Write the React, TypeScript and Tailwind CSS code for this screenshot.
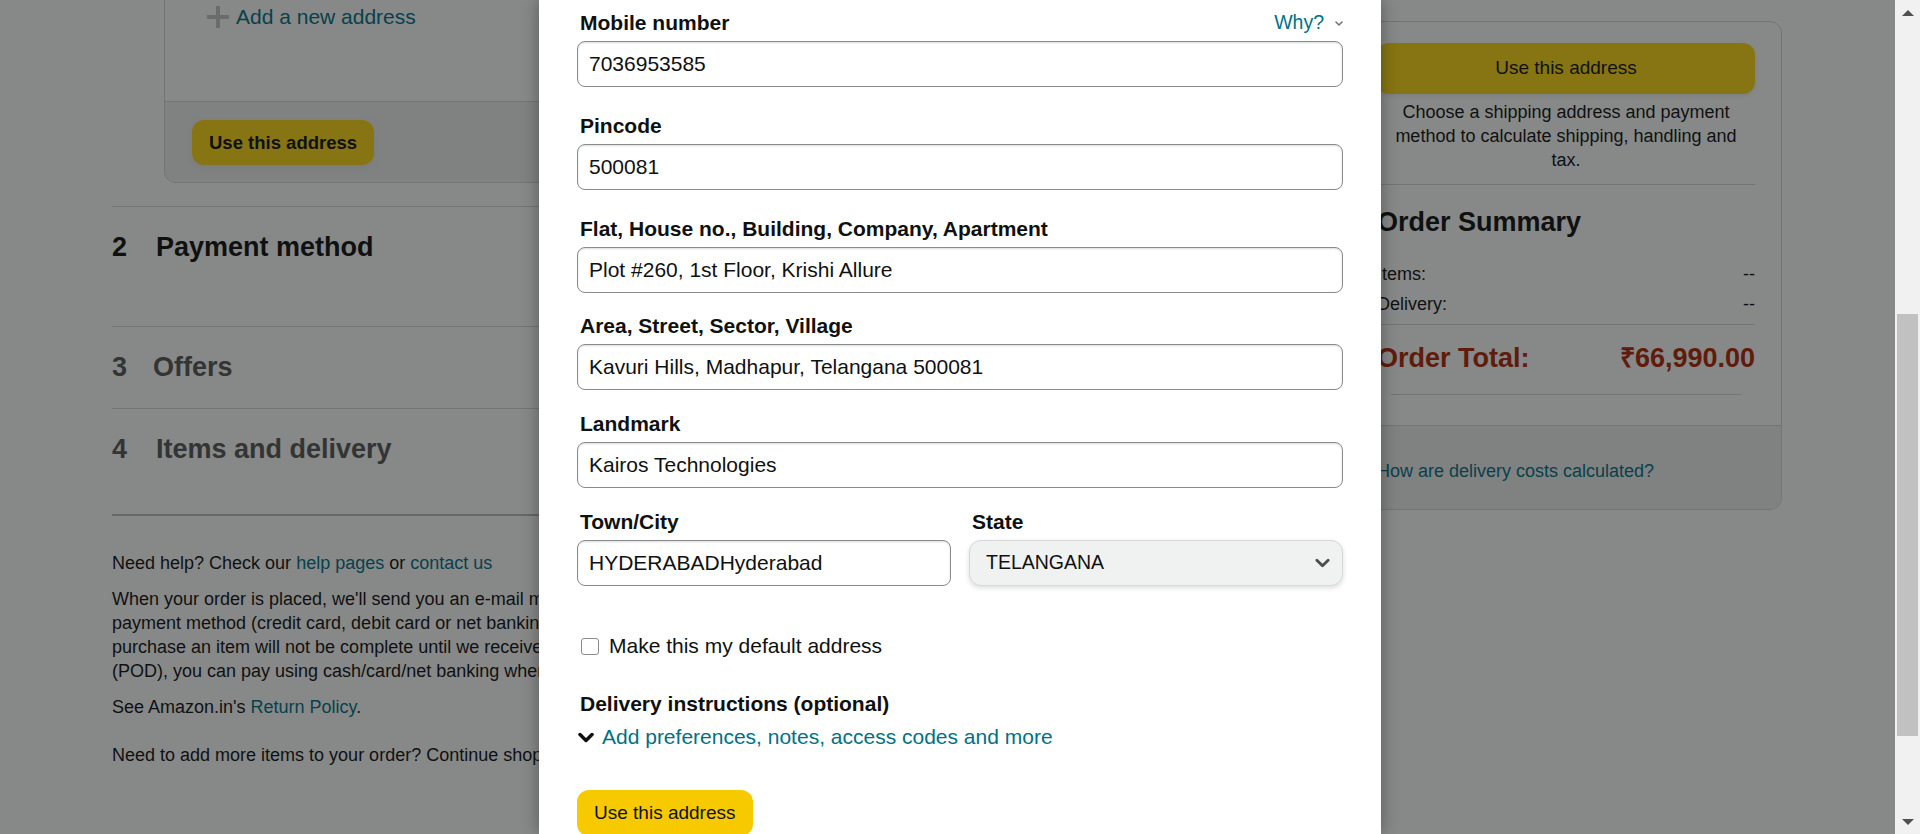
import React from 'react'

const fields = [
  { label: 'Pincode', value: '500081', gap: 'mt-[24px]' },
  { label: 'Flat, House no., Building, Company, Apartment', value: 'Plot #260, 1st Floor, Krishi Allure', gap: 'mt-[24px]' },
  { label: 'Area, Street, Sector, Village', value: 'Kavuri Hills, Madhapur, Telangana 500081', gap: 'mt-[18px]' },
  { label: 'Landmark', value: 'Kairos Technologies', gap: 'mt-[19px]' },
]

function TextInput({ value }: { value: string }) {
  return (
    <div className="mt-[3px] h-[46px] rounded-[8px] border border-[#888C8C] bg-white px-[11px] flex items-center text-[21px] text-[#0F1111] shadow-[inset_0_1px_2px_rgba(15,17,17,0.15)]">
      {value}
    </div>
  )
}

function FieldLabel({ children }: { children: React.ReactNode }) {
  return <div className="h-[30px] leading-[30px] pl-[3px] text-[21px] font-bold text-[#0F1111]">{children}</div>
}

function Chevron({ className, width = 3 }: { className: string; width?: number }) {
  return (
    <svg viewBox="0 0 16 10" className={className} fill="none" stroke="currentColor" strokeWidth={width} strokeLinecap="round" strokeLinejoin="round">
      <path d="M2 2l6 6 6-6" />
    </svg>
  )
}

function Section({ num, title, dark, className, numW }: { num: string; title: string; dark?: boolean; className: string; numW: string }) {
  return (
    <div className={className}>
      <div className={`flex items-center h-[36px] text-[27px] font-bold ${dark ? 'text-[#0F1111]' : 'text-[#565959]'}`}>
        <span className={numW}>{num}</span>
        <span>{title}</span>
      </div>
    </div>
  )
}

function PageBehind() {
  return (
    <div className="flex gap-[30px] pl-[112px] text-[#0F1111]">
      <div className="w-[1208px] shrink-0">
        <div className="ml-[52px] rounded-b-[12px] border-x border-b border-[#D5D9D9] bg-white">
          <div className="h-[101px] pl-[42px]">
            <div className="flex items-center h-[34px] gap-[7px]">
              <svg viewBox="0 0 22 22" className="w-[22px] h-[22px] text-[#C4C6C6]" fill="currentColor">
                <rect x="9" y="0" width="4" height="22" />
                <rect x="0" y="9" width="22" height="4" />
              </svg>
              <span className="text-[21px] text-[#007185]">Add a new address</span>
            </div>
          </div>
          <div className="border-t border-[#D5D9D9] bg-[#F0F2F2] rounded-b-[11px] pl-[27px] pt-[18px] pb-[17px]">
            <div className="inline-flex items-center h-[45px] px-[17px] rounded-[12px] bg-[#FFD814] text-[18.5px] font-bold shadow-[0_2px_5px_rgba(213,217,217,0.5)]">
              Use this address
            </div>
          </div>
        </div>

        <Section className="mt-[23px] h-[120px] border-t border-[#D5D9D9] pt-[22px]" num="2" title="Payment method" dark numW="w-[44px]" />
        <Section className="h-[82px] border-t border-[#D5D9D9] pt-[22px]" num="3" title="Offers" numW="w-[41px]" />
        <Section className="h-[108px] border-t border-b-2 border-t-[#D5D9D9] border-b-[#BBBFBF] pt-[22px]" num="4" title="Items and delivery" numW="w-[44px]" />

        {/* the rest of these lines sits under the modal */}
        <div className="text-[18px] leading-[24px] whitespace-nowrap">
          <p className="mt-[35px]">
            Need help? Check our <span className="text-[#007185]">help pages</span> or <span className="text-[#007185]">contact us</span>
          </p>
          <div className="mt-[12px]">
            <div>When your order is placed, we'll send you an e-mail message</div>
            <div>payment method (credit card, debit card or net banking),</div>
            <div>purchase an item will not be complete until we receive</div>
            <div>(POD), you can pay using cash/card/net banking when</div>
          </div>
          <p className="mt-[12px]">
            See Amazon.in's <span className="text-[#007185]">Return Policy</span>.
          </p>
          <p className="mt-[24px]">Need to add more items to your order? Continue shopping</p>
        </div>
      </div>

      <div className="w-[432px] shrink-0 pt-[21px]">
        <div className="rounded-[12px] border border-[#D5D9D9] bg-white">
          <div className="px-[26px] pt-[21px] pb-[30px]">
            <div className="h-[51px] rounded-[12px] bg-[#FFD814] flex items-center justify-center text-[19px] shadow-[0_2px_5px_rgba(213,217,217,0.5)]">
              Use this address
            </div>
            <p className="mt-[6px] text-center text-[18px] leading-[24px]">
              Choose a shipping address and payment
              <br />
              method to calculate shipping, handling and
              <br />
              tax.
            </p>
            <div className="mt-[12px] border-t border-[#D5D9D9]" />
            <h2 className="mt-[19px] text-[27px] leading-[36px] font-bold">Order Summary</h2>
            <div className="mt-[19px] text-[18px] leading-[30px]">
              <div className="flex justify-between">
                <span>Items:</span>
                <span>--</span>
              </div>
              <div className="flex justify-between">
                <span>Delivery:</span>
                <span>--</span>
              </div>
            </div>
            <div className="mt-[5px] border-t border-[#D5D9D9]" />
            <div className="mt-[15px] flex justify-between text-[27px] leading-[36px] font-bold text-[#B12704]">
              <span>Order Total:</span>
              <span>₹66,990.00</span>
            </div>
            <div className="mt-[18px] mx-[14px] border-t border-[#D5D9D9]" />
          </div>
          <div className="h-[84px] border-t border-[#D5D9D9] bg-[#F0F2F2] rounded-b-[11px] px-[26px] pt-[33px]">
            <span className="text-[18px] leading-[24px] text-[#007185]">How are delivery costs calculated?</span>
          </div>
        </div>
      </div>
    </div>
  )
}

function AddressModal() {
  return (
    <div className="absolute top-0 bottom-0 left-[539px] w-[842px] bg-white shadow-[0_0_16px_rgba(0,0,0,0.35)] px-[38px] pt-[8px] text-[#0F1111]">
      <div className="flex items-center justify-between">
        <FieldLabel>Mobile number</FieldLabel>
        <div className="flex items-center gap-[11px] text-[19.5px] text-[#007185]">
          <span>Why?</span>
          <Chevron className="w-[8px] h-[5px] text-[#6F7373]" />
        </div>
      </div>
      <TextInput value="7036953585" />

      {fields.map(f => (
        <div key={f.label} className={f.gap}>
          <FieldLabel>{f.label}</FieldLabel>
          <TextInput value={f.value} />
        </div>
      ))}

      <div className="mt-[19px] grid grid-cols-2 gap-[18px]">
        <div>
          <FieldLabel>Town/City</FieldLabel>
          <TextInput value="HYDERABADHyderabad" />
        </div>
        <div>
          <FieldLabel>State</FieldLabel>
          <div className="mt-[3px] h-[46px] rounded-[12px] border border-[#D5D9D9] bg-[#F0F2F2] pl-[16px] pr-[12px] flex items-center justify-between text-[19.5px] shadow-[0_2px_5px_rgba(15,17,17,0.15)]">
            <span>TELANGANA</span>
            <Chevron className="w-[15px] h-[10px] text-[#494D4D]" />
          </div>
        </div>
      </div>

      <div className="mt-[45px] flex items-center h-[30px] pl-[4px]">
        <span className="w-[18px] h-[17px] rounded-[3px] border border-[#888C8C] bg-white" />
        <span className="ml-[10px] text-[21px]">Make this my default address</span>
      </div>

      <div className="mt-[28px]">
        <FieldLabel>Delivery instructions (optional)</FieldLabel>
      </div>
      <div className="mt-[3px] flex items-center h-[30px] pl-[1px]">
        <Chevron className="w-[16px] h-[11px] text-[#0F1111]" width={3.5} />
        <span className="ml-[8px] text-[21px] text-[#007185]">Add preferences, notes, access codes and more</span>
      </div>

      <div className="mt-[38px] inline-flex items-center h-[46px] px-[17px] rounded-[12px] bg-[#F7CA00] text-[19px]">
        Use this address
      </div>
    </div>
  )
}

function Scrollbar() {
  return (
    <div className="w-[25px] shrink-0 bg-[#F1F1F1] flex flex-col">
      <div className="h-[25px] flex items-center justify-center">
        <svg viewBox="0 0 12 6" className="w-[12px] h-[6px] text-[#505050]" fill="currentColor">
          <path d="M0 6L6 0l6 6z" />
        </svg>
      </div>
      <div className="flex-1">
        <div className="mt-[289px] mx-[2px] h-[422px] bg-[#C1C1C1]" />
      </div>
      <div className="h-[25px] flex items-center justify-center">
        <svg viewBox="0 0 12 6" className="w-[12px] h-[6px] text-[#505050]" fill="currentColor">
          <path d="M0 0h12L6 6z" />
        </svg>
      </div>
    </div>
  )
}

export default function App() {
  return (
    <div className="h-[834px] w-full flex overflow-hidden bg-white font-['Liberation_Sans',Arial,sans-serif]">
      <div className="relative flex-1 overflow-hidden bg-white">
        <PageBehind />
        <div className="absolute inset-0 bg-[rgba(15,17,17,0.5)]" />
        <AddressModal />
      </div>
      <Scrollbar />
    </div>
  )
}
